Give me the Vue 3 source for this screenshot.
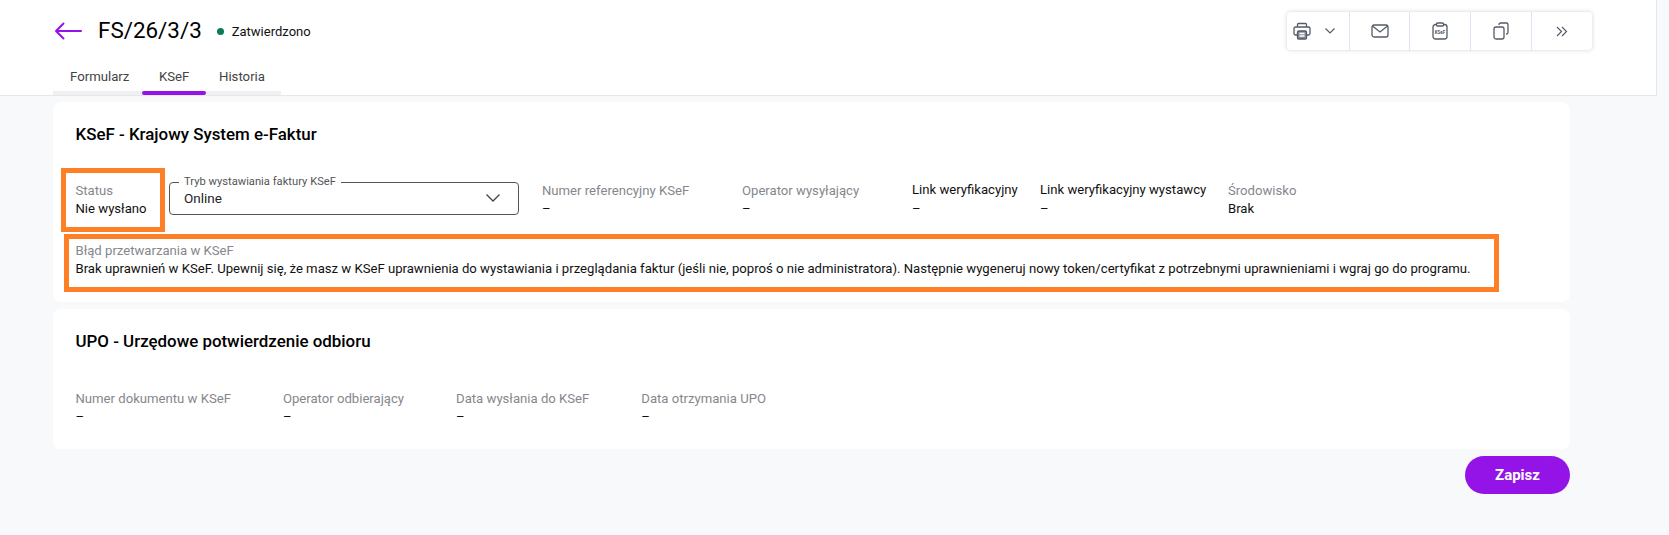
<template>
  <div class="page">
    <header class="top">
      <div class="top-row">
        <div class="title-wrap">
          <svg class="back" width="30" height="18" viewBox="0 0 30 18" fill="none">
            <path d="M28 9H3M10.500 1.500 3 9l7.500 7.500" stroke="#9414e8" stroke-width="2" stroke-linecap="round" stroke-linejoin="round"/>
          </svg>
          <h1>FS/26/3/3</h1>
          <span class="dot"></span>
          <span class="state">Zatwierdzono</span>
        </div>
        <div class="tools">
          <button class="tool tool-print">
            <svg width="18" height="18" viewBox="0 0 18 18" fill="none" stroke="#555b66" stroke-width="1.300">
              <path d="M4.500 5V2.500a1 1 0 0 1 1-1h7a1 1 0 0 1 1 1V5"/>
              <path d="M4 13H2.500a1.500 1.500 0 0 1-1.500-1.500v-5A1.500 1.500 0 0 1 2.500 5h13A1.500 1.500 0 0 1 17 6.500v5a1.500 1.500 0 0 1-1.500 1.500H14"/>
              <rect x="4.500" y="9" width="9" height="8" rx="1.200" fill="#8a8f98"/>
              <path d="M6.500 11.500h5M6.500 14h5" stroke="#fff"/>
            </svg>
            <svg width="12" height="8" viewBox="0 0 12 8" fill="none" stroke="#555b66" stroke-width="1.200"><path d="m1.500 1.500 4.500 4.500 4.500-4.500"/></svg>
          </button>
          <button class="tool tool-mail">
            <svg width="18" height="14" viewBox="0 0 18 14" fill="none" stroke="#555b66" stroke-width="1.300">
              <rect x="1" y="1" width="16" height="12" rx="2"/>
              <path d="m1.500 2 7.500 6 7.500-6"/>
            </svg>
          </button>
          <button class="tool">
            <svg width="16" height="18" viewBox="0 0 16 18" fill="none" stroke="#555b66" stroke-width="1.300">
              <rect x="1" y="2.500" width="14" height="14.500" rx="2.500"/>
              <rect x="4.500" y="1" width="7" height="3" rx="1" fill="#fff"/>
              <text x="8" y="11.500" text-anchor="middle" class="tiny">KSeF</text>
            </svg>
          </button>
          <button class="tool">
            <svg width="16" height="18" viewBox="0 0 16 18" fill="none" stroke="#555b66" stroke-width="1.300">
              <path d="M6 3V2.500A1.500 1.500 0 0 1 7.500 1h6A1.500 1.500 0 0 1 15 2.500v8a1.500 1.500 0 0 1-1.500 1.500H13"/>
              <rect x="1" y="5" width="10" height="12" rx="2"/>
            </svg>
          </button>
          <button class="tool tool-more">
            <svg width="12" height="11" viewBox="0 0 12 11" fill="none" stroke="#555b66" stroke-width="1.200"><path d="m1 1 4.500 4.500-4.500 4.500M6 1l4.500 4.500-4.500 4.500"/></svg>
          </button>
        </div>
      </div>
      <nav class="tabs">
        <a class="tab">Formularz</a>
        <a class="tab active">KSeF</a>
        <a class="tab">Historia</a>
      </nav>
    </header>

    <main class="content">
      <section class="card card-ksef">
        <h2>KSeF - Krajowy System e-Faktur</h2>
        <div class="fields">
          <div class="field field-status">
            <span class="lbl">Status</span>
            <span class="val">Nie wysłano</span>
          </div>
          <div class="select">
            <span class="select-lbl">Tryb wystawiania faktury KSeF</span>
            <span class="select-val">Online</span>
            <svg width="16" height="10" viewBox="0 0 16 10" fill="none" stroke="#444" stroke-width="1.300"><path d="m1.500 1.500 6.500 6.500 6.500-6.500"/></svg>
          </div>
          <div class="field w-ref">
            <span class="lbl">Numer referencyjny KSeF</span>
            <span class="val">–</span>
          </div>
          <div class="field w-op">
            <span class="lbl">Operator wysyłający</span>
            <span class="val">–</span>
          </div>
          <div class="field w-link">
            <span class="lbl dark">Link weryfikacyjny</span>
            <span class="val">–</span>
          </div>
          <div class="field w-link2">
            <span class="lbl dark">Link weryfikacyjny wystawcy</span>
            <span class="val">–</span>
          </div>
          <div class="field">
            <span class="lbl">Środowisko</span>
            <span class="val">Brak</span>
          </div>
        </div>
        <div class="field field-error">
          <span class="lbl">Błąd przetwarzania w KSeF</span>
          <span class="val">Brak uprawnień w KSeF. Upewnij się, że masz w KSeF uprawnienia do wystawiania i przeglądania faktur (jeśli nie, poproś o nie administratora). Następnie wygeneruj nowy token/certyfikat z potrzebnymi uprawnieniami i wgraj go do programu.</span>
        </div>
      </section>

      <section class="card card-upo">
        <h2>UPO - Urzędowe potwierdzenie odbioru</h2>
        <div class="fields fields-upo">
          <div class="field" v-for="label in upoLabels" :key="label">
            <span class="lbl">{{ label }}</span>
            <span class="val">–</span>
          </div>
        </div>
      </section>

      <div class="actions">
        <button class="save">Zapisz</button>
      </div>
    </main>
  </div>
</template>

<script setup>
const upoLabels = [
  'Numer dokumentu w KSeF',
  'Operator odbierający',
  'Data wysłania do KSeF',
  'Data otrzymania UPO'
]
</script>

<style>
html, body {
  margin: 0;
  background: #f8f9fb;
}
</style>

<style scoped>
* {
  box-sizing: border-box;
  font-family: Roboto, "Liberation Sans", sans-serif;
}

.page {
  height: 535px;
  overflow: hidden;
  background: #f8f9fb;
  color: #111;
}

/* Naglowek */
.top {
  width: 1657px;
  height: 96px;
  padding: 12px 64px 0 53px;
  background: #fff;
  border-right: 1px solid #e6e7ec;
  border-bottom: 1px solid #e6e7ec;
}

.top-row {
  display: flex;
  justify-content: space-between;
  align-items: flex-start;
  height: 56px;
}

.title-wrap {
  display: flex;
  align-items: center;
  height: 36px;
}

.back {
  margin-right: 15px;
  margin-top: 1px;
}

h1 {
  margin: 0 15px 0 0;
  font-size: 22.400px;
  font-weight: 400;
  color: #000;
}

.dot {
  width: 7px;
  height: 7px;
  border-radius: 50%;
  background: #0d7a5a;
  margin: 2px 8px 0 0;
}

.state {
  margin-top: 2px;
  font-size: 13px;
  color: #111;
}

.tools {
  display: flex;
  height: 38px;
  background: #fff;
  border-radius: 4px;
  box-shadow: 0 0 4px rgba(40, 40, 80, 0.2);
}

.tool {
  display: flex;
  align-items: center;
  justify-content: center;
  width: 61px;
  padding: 0;
  border: none;
  border-right: 1px solid #e2e2f4;
  background: none;
}

.tool-more {
  width: 60px;
  border-right: none;
}

.tool-mail {
  width: 60px;
}

.tool-print {
  width: 63px;
  justify-content: flex-start;
  padding-left: 6px;
  gap: 13px;
}

.tiny {
  font-size: 4.500px;
  font-weight: 700;
  fill: #555b66;
  stroke: none;
}

.tabs {
  display: grid;
  grid-template-columns: 89px 64px 75px;
  width: 228px;
  height: 27px;
  border-bottom: 4px solid #f0f0f2;
}

.tab {
  position: relative;
  display: block;
  height: 27px;
  padding: 1px 0 0 17px;
  font-size: 13.200px;
  line-height: 16px;
  color: #444;
}

.tab:last-child {
  padding-left: 13px;
}

.tab.active::after {
  content: "";
  position: absolute;
  left: 0;
  right: 0;
  bottom: 0;
  height: 4px;
  border-radius: 2px;
  background: #9414e8;
}

/* Karty */
.content {
  width: 1517px;
  margin-left: 53px;
  padding-top: 6px;
}

.card {
  background: #fff;
  border-radius: 8px;
  padding: 0 23px 0 22.500px;
}

.card-ksef {
  height: 200px;
  padding-top: 23px;
}

.card-upo {
  height: 140px;
  margin-top: 7px;
  padding-top: 23px;
}

h2 {
  margin: 0;
  font-size: 16.900px;
  font-weight: 500;
  line-height: 19px;
  color: #000;
}

.fields {
  display: flex;
  gap: 22px;
  margin-top: 38px;
}

.fields-upo {
  gap: 52px;
  margin-top: 39px;
}

.field {
  display: flex;
  flex-direction: column;
  flex-shrink: 0;
  white-space: nowrap;
}

.lbl {
  font-size: 13.130px;
  line-height: 18px;
  color: #85878d;
}

.lbl.dark {
  color: #111;
  margin-top: -1px;
  margin-bottom: 1px;
}

.val {
  font-size: 13.130px;
  line-height: 18px;
  color: #111;
}

.w-ref {
  width: 178px;
}

.w-op {
  width: 148px;
}

.w-link {
  width: 106px;
}

.w-link2 {
  width: 166px;
}

/* Ramki adnotacji na zrzucie */
.field-status,
.field-error {
  position: relative;
}

.field-status::after,
.field-error::after {
  content: "";
  position: absolute;
  box-sizing: border-box;
  border: 5px solid #ff7f27;
  pointer-events: none;
}

.field-status::after {
  left: -14.500px;
  top: -14px;
  width: 104px;
  height: 64px;
}

.field-error::after {
  left: -11.500px;
  top: -8px;
  width: 1435px;
  height: 58px;
}

.field-status {
  width: 70.500px;
  margin-right: 1px;
}

.field-error {
  margin-top: 24px;
}

.select {
  position: relative;
  display: flex;
  align-items: center;
  justify-content: space-between;
  width: 350px;
  height: 33px;
  margin-right: 1px;
  padding: 0 17px 1px 14px;
  border: 1px solid #555;
  border-radius: 4px;
}

.select-lbl {
  position: absolute;
  left: 9px;
  top: -8px;
  padding: 0 5px;
  background: #fff;
  font-size: 11.200px;
  line-height: 13px;
  color: #555;
}

.select-val {
  font-size: 13.500px;
  color: #222;
}

.actions {
  display: flex;
  justify-content: flex-end;
  margin-top: 7px;
}

.save {
  width: 105px;
  height: 38px;
  border: none;
  border-radius: 19px;
  background: #9414e8;
  color: #fff;
  font-size: 15px;
  font-weight: 700;
}
</style>
